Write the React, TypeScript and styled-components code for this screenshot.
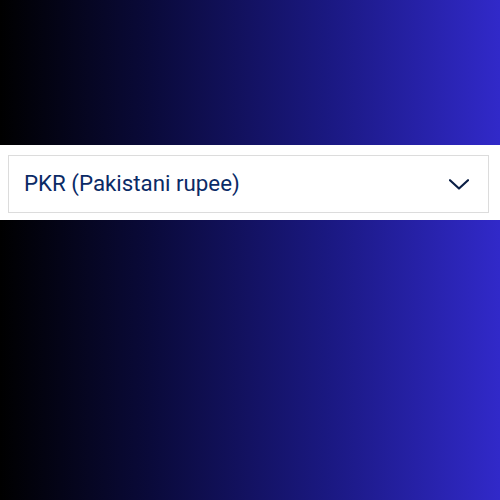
import React from "react";
import styled, { createGlobalStyle } from "styled-components";

const Global = createGlobalStyle`
  html, body { margin: 0; padding: 0; }
  body { font-family: Roboto, "Noto Sans", sans-serif; }
`;

const Page = styled.div`
  width: 500px;
  height: 500px;
  background: linear-gradient(90deg, #000000 0%, #0a0a3a 30%, #1a1880 65%, #3129c9 100%);
  padding-top: 145px;
  box-sizing: border-box;
`;

const Band = styled.div`
  background: #ffffff;
  padding: 10px 11px 7px 8px;
`;

const SelectBox = styled.div`
  height: 58px;
  box-sizing: border-box;
  border: 1px solid #dcdcdc;
  display: flex;
  align-items: center;
  justify-content: space-between;
  padding: 0 19px 0 15px;
`;

const Label = styled.span`
  font-family: Roboto, "Noto Sans", sans-serif;
  font-size: 22.3px;
  color: #0a2a66;
  padding-bottom: 2px;
`;

const Chevron = () => (
  <svg width="20" height="11" viewBox="0 0 20 11" fill="none">
    <path d="M1 1.2 L10 9.5 L19 1.2" stroke="#0b1f45" strokeWidth="2.2" strokeLinecap="round" strokeLinejoin="round" />
  </svg>
);

export default function App() {
  return (
    <>
      <Global />
      <Page>
        <Band>
          <SelectBox>
            <Label>PKR (Pakistani rupee)</Label>
            <Chevron />
          </SelectBox>
        </Band>
      </Page>
    </>
  );
}
